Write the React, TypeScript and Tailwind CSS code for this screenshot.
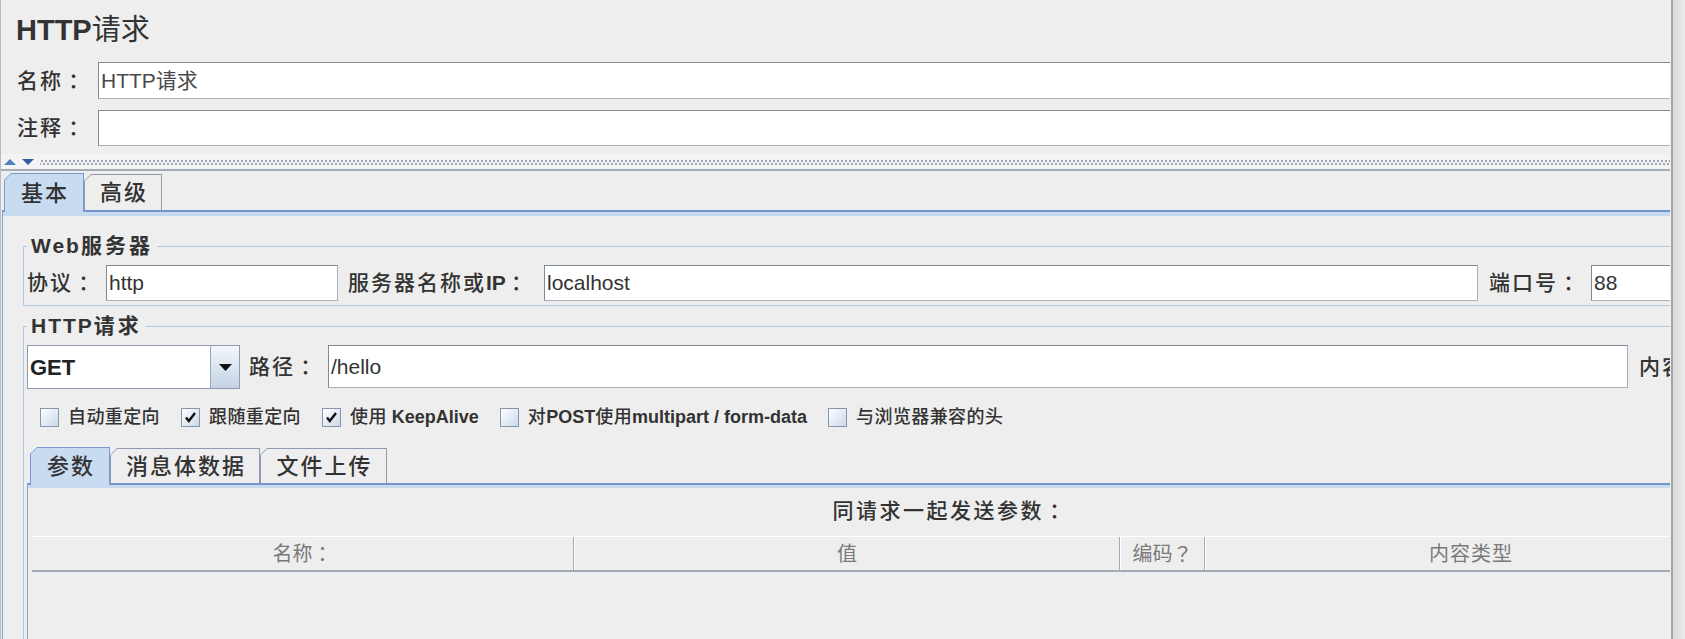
import React from "react";

function Mixed({ text, latin, cjk }: { text: string; latin: string; cjk: string }) {
  const parts = text.match(/[\u0000-\u024F]+|：|？|[^\u0000-\u024F：？]+/g) ?? [];
  return (
    <>
      {parts.map((p, i) =>
        p === "：" || p === "？" ? (
          <span key={i} className={"font-['Noto_Sans_CJK_TC'] " + cjk}>
            {p}
          </span>
        ) : (
          <span key={i} className={/[\u0000-\u024F]/.test(p) ? latin : cjk}>
            {p}
          </span>
        )
      )}
    </>
  );
}

function Input({ value, className, textClass }: { value: string; className: string; textClass?: string }) {
  return (
    <div
      className={
        "shrink-0 flex items-center pl-[2px] bg-white border border-[#a7b0bb] border-t-[#7f8a97] border-l-[#7f8a97] text-[21px] whitespace-nowrap overflow-hidden " +
        (textClass ?? "text-[#333]") +
        " " +
        className
      }
    >
      {value}
    </div>
  );
}

function Label({ text, className }: { text: string; className: string }) {
  return (
    <div className={"shrink-0 flex items-center text-[21px] text-[#333] whitespace-nowrap " + className}>
      <Mixed text={text} latin="font-bold" cjk="font-medium tracking-[2px]" />
    </div>
  );
}

function Tab({ label, selected, className }: { label: string; selected?: boolean; className: string }) {
  return (
    <div
      className={
        (selected ? "bg-[#7c99cd] relative z-10 -mb-[2px] " : "bg-[#8e9bae] ") +
        "shrink-0 pt-[1px] px-[1px] [clip-path:polygon(7px_0,100%_0,100%_100%,0_100%,0_7px)] " +
        className
      }
    >
      <div
        className={
          (selected ? "bg-[#c7dbf1] " : "bg-[#eeeeee] ") +
          "h-full flex items-center justify-center pl-[2px] text-[22px] font-medium tracking-[2px] text-[#333] [clip-path:polygon(6px_0,100%_0,100%_100%,0_100%,0_6px)]"
        }
      >
        {label}
      </div>
    </div>
  );
}

function CheckBox({ checked }: { checked?: boolean }) {
  return (
    <div className="shrink-0 w-[19px] h-[19px] border border-[#8797ad] bg-linear-to-br from-white to-[#cbd9ea] flex items-center justify-center">
      {checked && (
        <svg width="13" height="12" viewBox="0 0 13 12">
          <path d="M2 6.5 L4.8 10 L11 2" fill="none" stroke="#111" strokeWidth="2.4" strokeLinejoin="miter" />
        </svg>
      )}
    </div>
  );
}

function Check({ label, checked }: { label: string; checked?: boolean }) {
  return (
    <div className="flex items-center gap-[9px] shrink-0">
      <CheckBox checked={checked} />
      <span className="text-[18px] text-[#333] whitespace-nowrap">
        <Mixed text={label} latin="font-bold" cjk="font-medium tracking-[0.4px]" />
      </span>
    </div>
  );
}

function Legend({ text }: { text: string }) {
  return (
    <legend className="px-[4px] text-[21px] leading-[24px] text-[#333] whitespace-nowrap">
      <Mixed text={text} latin="font-bold tracking-[2px]" cjk="font-bold tracking-[3px]" />
    </legend>
  );
}

export default function App() {
  return (
    <div className="w-[1685px] h-[639px] overflow-hidden flex bg-[#eeeeee] font-['Liberation_Sans','Noto_Sans_CJK_SC',sans-serif]">
      <div className="w-[1px] shrink-0 bg-[#b8bcc2]" />
      <div className="w-[1669px] shrink-0 overflow-hidden flex flex-col">
        {/* Title */}
        <div className="h-[62px] shrink-0 flex items-center pl-[15px] text-[29px] text-[#333] whitespace-nowrap">
          <Mixed text="HTTP请求" latin="font-bold" cjk="font-normal" />
        </div>
        {/* Name */}
        <div className="h-[37px] shrink-0 flex">
          <Label text="名称：" className="w-[97px] pl-[16px]" />
          <Input value="HTTP请求" className="w-[1600px] h-[37px]" textClass="text-[#4a4a4a]" />
        </div>
        {/* Comment */}
        <div className="mt-[11px] h-[36px] shrink-0 flex">
          <Label text="注释：" className="w-[97px] pl-[16px]" />
          <Input value="" className="w-[1600px] h-[36px]" />
        </div>
        {/* Splitter */}
        <div className="mt-[8px] h-[17px] shrink-0 flex items-center bg-[#f3f3f3] border-b-2 border-[#a3acb7]">
          <svg width="36" height="8" viewBox="0 0 36 8" className="ml-[3px] shrink-0">
            <path d="M0 7 L6 1 L12 7 Z" fill="#4f7fbf" />
            <path d="M18 1 L30 1 L24 7 Z" fill="#2f5d9f" />
          </svg>
          <div className="flex-1 h-[6px] [background-image:radial-gradient(circle,#9aa6b4_0.9px,transparent_1.2px),radial-gradient(circle,#9aa6b4_0.9px,transparent_1.2px)] [background-size:4px_6px] [background-position:0_-1px,2px_2px]" />
        </div>
        {/* Outer tabs */}
        <div className="h-[39px] shrink-0 flex items-end pl-[3px]">
          <Tab label="基本" selected className="w-[80px] h-[39px]" />
          <Tab label="高级" className="w-[78px] h-[36px]" />
        </div>
        <div className="ml-[1px] flex-1 border-l border-[#86a2d3] flex flex-col">
          <div className="h-[2px] shrink-0 bg-[#7594ca]" />
          <div className="h-[4px] shrink-0 bg-[#c8daef]" />
          <div className="pl-[20px] pt-[18px] flex flex-col">
            {/* Web server */}
            <fieldset className="w-[1700px] border border-[#b3cae4] pl-[3px] pt-[7px] pb-[4px]">
              <Legend text="Web服务器" />
              <div className="h-[36px] flex">
                <Label text="协议：" className="w-[79px]" />
                <Input value="http" className="w-[232px] h-[36px]" />
                <Label text="服务器名称或IP：" className="ml-[10px] w-[196px]" />
                <Input value="localhost" className="w-[934px] h-[36px]" />
                <Label text="端口号：" className="ml-[11px] w-[102px]" />
                <Input value="88" className="w-[140px] h-[36px]" />
              </div>
            </fieldset>
            {/* HTTP request */}
            <fieldset className="mt-[8px] w-[1900px] border border-[#b3cae4] pl-[3px] pt-[7px]">
              <Legend text="HTTP请求" />
              <div className="h-[44px] flex">
                <div className="w-[213px] h-[44px] shrink-0 flex border border-[#8e9bb0] bg-white">
                  <div className="flex-1 flex items-center pl-[2px] text-[22px] font-bold text-[#222]">GET</div>
                  <div className="w-[29px] border-l border-[#98a7ba] bg-linear-to-b from-[#f4f7fb] to-[#c4d3e5] flex items-center justify-center">
                    <svg width="13" height="7" viewBox="0 0 13 7">
                      <path d="M0 0 H13 L6.5 7 Z" fill="#111" />
                    </svg>
                  </div>
                </div>
                <Label text="路径：" className="ml-[9px] w-[79px]" />
                <Input value="/hello" className="w-[1300px] h-[43px]" />
                <Label text="内容编码：" className="ml-[11px]" />
              </div>
              <div className="mt-[18px] h-[20px] flex items-center gap-[21px] pl-[13px]">
                <Check label="自动重定向" />
                <Check label="跟随重定向" checked />
                <Check label="使用 KeepAlive" checked />
                <Check label="对POST使用multipart / form-data" />
                <Check label="与浏览器兼容的头" />
              </div>
              {/* Inner tabs */}
              <div className="mt-[20px] flex flex-col">
                <div className="h-[36px] flex items-end pl-[3px]">
                  <Tab label="参数" selected className="w-[80px] h-[38px]" />
                  <Tab label="消息体数据" className="w-[150px] h-[35px]" />
                  <Tab label="文件上传" className="w-[127px] h-[35px]" />
                </div>
                <div className="border-l border-[#86a2d3] h-[200px] flex flex-col">
                  <div className="h-[2px] shrink-0 bg-[#7594ca]" />
                  <div className="h-[3px] shrink-0 bg-[#c8daef]" />
                  <div className="mt-[11px] h-[24px] w-[1844px] flex items-center justify-center text-[21px] text-[#333]">
                    <Mixed text="同请求一起发送参数：" latin="font-bold" cjk="font-medium tracking-[2.5px]" />
                  </div>
                  <div className="mt-[13px] ml-[4px] h-[36px] flex border-t border-white border-b-2 border-b-[#a2abb5] text-[20px] text-[#7a7a7a]">
                    <div className="w-[542px] shrink-0 flex items-center justify-center border-r border-[#a2abb5]">
                      <Mixed text="名称：" latin="" cjk="" />
                    </div>
                    <div className="w-[546px] shrink-0 flex items-center justify-center border-l border-white border-r border-r-[#a2abb5]">值</div>
                    <div className="w-[85px] shrink-0 flex items-center justify-center border-l border-white border-r border-r-[#a2abb5]">
                      <Mixed text="编码？" latin="" cjk="" />
                    </div>
                    <div className="w-[531px] shrink-0 flex items-center justify-center border-l border-white tracking-[1px]">内容类型</div>
                  </div>
                </div>
              </div>
            </fieldset>
          </div>
        </div>
      </div>
      <div className="w-[1px] shrink-0" />
      <div className="w-[2px] shrink-0 bg-[#a6a6a6]" />
      <div className="flex-1 bg-linear-to-r from-[#d9d9d9] to-[#ececec]" />
    </div>
  );
}
